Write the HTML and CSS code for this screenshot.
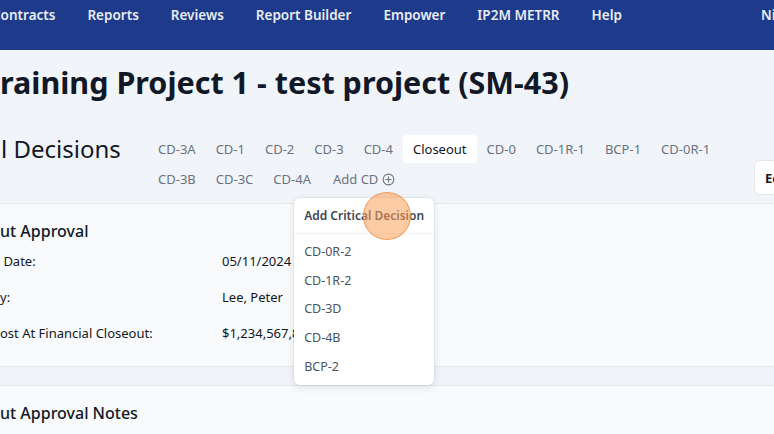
FILE: index.html
```html
<!DOCTYPE html>
<html lang="en">
<head>
<meta charset="utf-8">
<title>Critical Decisions</title>
<link rel="stylesheet" href="styles.css">
</head>
<body>
<nav class="topnav">
  <ul class="menu">
    <li>Contracts</li>
    <li>Reports</li>
    <li>Reviews</li>
    <li>Report Builder</li>
    <li>Empower</li>
    <li>IP2M METRR</li>
    <li>Help</li>
  </ul>
  <div class="user">Nick Smith</div>
</nav>
<main class="page">
  <h1 class="title"><span class="off">T</span>raining Project 1 - test project (SM-43)</h1>
  <div class="cd-header">
    <h2 class="cd-title"><span class="off">Critica</span>l Decisions</h2>
    <div class="tabs">
      <span class="tab">CD-3A</span>
      <span class="tab">CD-1</span>
      <span class="tab">CD-2</span>
      <span class="tab">CD-3</span>
      <span class="tab">CD-4</span>
      <span class="tab active">Closeout</span>
      <span class="tab">CD-0</span>
      <span class="tab">CD-1R-1</span>
      <span class="tab">BCP-1</span>
      <span class="tab">CD-0R-1</span>
      <span class="tab">CD-3B</span>
      <span class="tab">CD-3C</span>
      <span class="tab">CD-4A</span>
      <span class="tab add">Add CD
        <svg class="plus" viewBox="0 0 16 16" width="13" height="13" aria-hidden="true"><circle cx="8" cy="8" r="6.6" fill="none" stroke="currentColor" stroke-width="1.3"/><path d="M8 4.8v6.4M4.8 8h6.4" stroke="currentColor" stroke-width="1.3" stroke-linecap="round"/></svg>
        <div class="dropdown">
          <div class="dd-head">Add Critical Decision</div>
          <ul class="dd-list">
            <li>CD-0R-2</li>
            <li>CD-1R-2</li>
            <li>CD-3D</li>
            <li>CD-4B</li>
            <li>BCP-2</li>
          </ul>
        </div>
      </span>
    </div>
    <button class="edit">Edit</button>
  </div>
  <section class="card">
    <h3 class="card-title"><span class="off">Closeo</span>ut Approval</h3>
    <dl class="fields">
      <dt><span class="off">Closeout</span> Date:</dt><dd>05/11/2024</dd>
      <dt><span class="off">Approved B</span>y:</dt><dd>Lee, Peter</dd>
      <dt><span class="off">Total Project C</span>ost At Financial Closeout:</dt><dd>$1,234,567,890</dd>
    </dl>
  </section>
  <section class="card card-notes">
    <h3 class="card-title"><span class="off">Closeo</span>ut Approval Notes</h3>
  </section>
</main>
<div class="click-dot" aria-hidden="true"></div>
</body>
</html>
```
FILE: styles.css
```css
* { box-sizing: border-box; }
html, body { margin: 0; padding: 0; }
body {
  width: 774px;
  height: 434px;
  overflow: hidden;
  background: #f1f4f9;
  font-family: "Noto Sans", "Open Sans", sans-serif;
  color: #111827;
  position: relative;
}
.off {
  display: inline-block;
  width: 0;
  direction: rtl;
  white-space: nowrap;
}
.topnav {
  height: 50px;
  background: #1e3a8a;
  display: flex;
  align-items: flex-start;
  padding-top: 5px;
}
.menu {
  list-style: none;
  margin: 0 0 0 -8px;
  padding: 0;
  display: flex;
  gap: 32px;
  flex: 1;
}
.menu li, .user {
  color: #e8ecf5;
  font-size: 13.5px;
  font-weight: 600;
  line-height: 20px;
  white-space: nowrap;
}
.user { width: 13px; flex-shrink: 0; }
.page { padding: 0; }
.title {
  margin: 14px 0 0 0;
  font-size: 30.5px;
  line-height: 36px;
  font-weight: 700;
  white-space: nowrap;
}
.cd-header {
  display: flex;
  align-items: flex-start;
  margin-top: 35px;
  white-space: nowrap;
}
.cd-title {
  margin: 0;
  width: 148px;
  flex-shrink: 0;
  font-size: 24px;
  font-weight: 400;
  line-height: 27px;
  padding-left: 1px;
}
.tabs {
  width: 600px;
  flex-shrink: 0;
  display: flex;
  flex-wrap: wrap;
  row-gap: 2px;
}
.tab {
  height: 28px;
  line-height: 28px;
  padding: 0 10px;
  font-size: 13px;
  color: #6b7280;
  border-radius: 4px;
}
.tab.active { background: #fff; color: #111827; }
.tab.add { position: relative; display: inline-flex; align-items: center; gap: 4px; margin-left: 2px; }
.plus { display: block; }
.edit {
  flex-shrink: 0;
  margin: 25px 0 0 6px;
  height: 35px;
  width: 70px;
  padding: 0 0 0 10px;
  text-align: left;
  border: 1px solid #e5e7eb;
  border-radius: 6px;
  background: #fff;
  font: 700 13px "Noto Sans", sans-serif;
  color: #111827;
}
.dropdown {
  position: absolute;
  top: calc(100% + 5px);
  left: 50%;
  transform: translateX(-50%);
  width: 140px;
  background: #fff;
  border-radius: 6px;
  box-shadow: 0 2px 8px rgba(0,0,0,0.12), 0 0 0 1px rgba(0,0,0,0.03);
  z-index: 5;
  line-height: normal;
}
.dd-head {
  height: 36px;
  line-height: 36px;
  padding-left: 10px;
  font-size: 12px;
  font-weight: 600;
  color: #3f4652;
  border-bottom: 1px solid #f1f2f4;
}
.dd-list {
  list-style: none;
  margin: 0;
  padding: 4px 0;
}
.dd-list li {
  height: 28.7px;
  line-height: 28.7px;
  padding-left: 10px;
  font-size: 12.5px;
  color: #4b5563;
}
.card {
  margin-top: 8px;
  background: #f9fafb;
  border-top: 1px solid #e6e9ee;
  border-bottom: 1px solid #e6e9ee;
  padding: 15px 0 15px 0;
}
.card-notes { margin-top: 18px; padding-top: 15px; height: 60px; }
.card-title {
  margin: 0;
  font-size: 16px;
  font-weight: 500;
  line-height: 24px;
  white-space: nowrap;
}
.fields {
  margin: 0;
  display: grid;
  grid-template-columns: 222px auto;
  grid-auto-rows: 36px;
  align-items: center;
  font-size: 13px;
}
.fields dt, .fields dd { margin: 0; white-space: nowrap; }
.click-dot {
  position: absolute;
  left: 363px;
  top: 192px;
  width: 48px;
  height: 48px;
  border-radius: 50%;
  background: rgba(251, 160, 90, 0.55);
  border: 1.5px solid rgba(240, 140, 60, 0.7);
  z-index: 10;
}
```
